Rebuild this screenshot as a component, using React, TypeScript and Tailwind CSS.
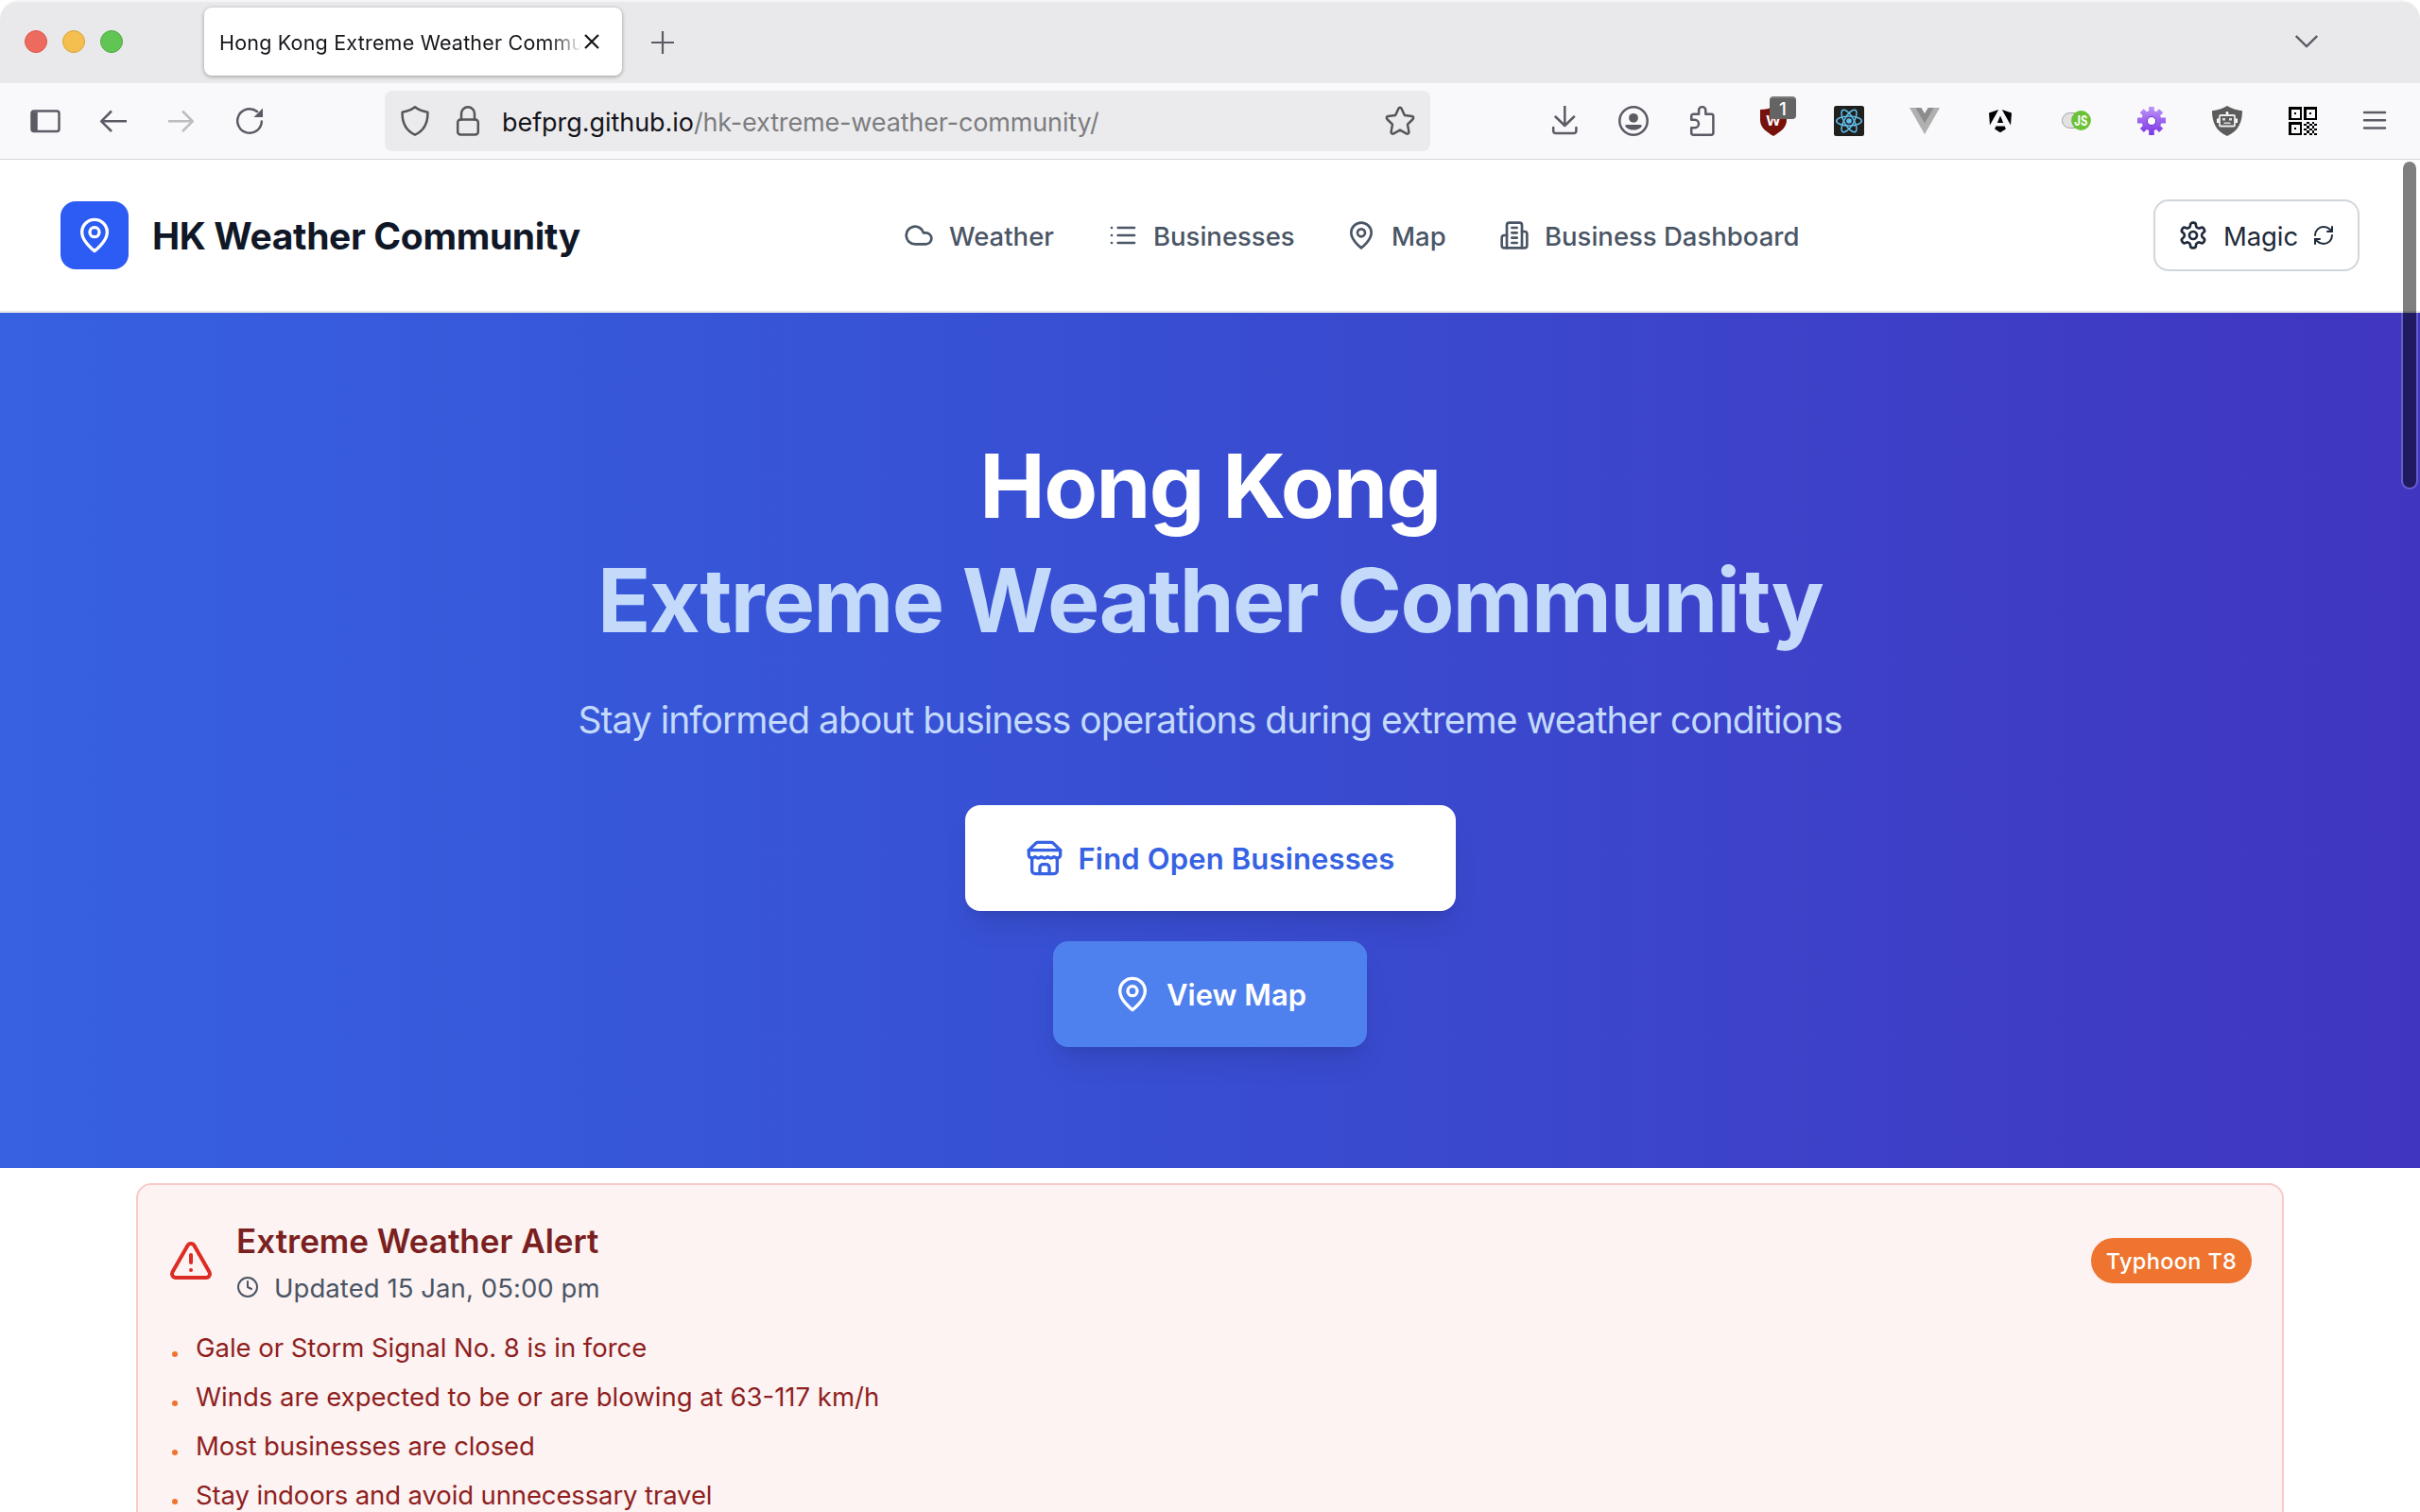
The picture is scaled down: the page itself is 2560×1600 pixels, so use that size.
import type { ReactNode } from 'react'

type IconProps = { className?: string; children?: ReactNode }

function Icon({ className, children }: IconProps) {
  return (
    <svg
      viewBox="0 0 24 24"
      fill="none"
      stroke="currentColor"
      strokeWidth="2"
      strokeLinecap="round"
      strokeLinejoin="round"
      className={`shrink-0 ${className}`}
    >
      {children}
    </svg>
  )
}

function MapPinIcon({ className }: IconProps) {
  return (
    <Icon className={className}>
      <path d="M20 10c0 6-8 12-8 12s-8-6-8-12a8 8 0 0 1 16 0Z" />
      <circle cx="12" cy="10" r="3" />
    </Icon>
  )
}

function CloudIcon({ className }: IconProps) {
  return (
    <Icon className={className}>
      <path d="M17.5 19H9a7 7 0 1 1 6.71-9h1.79a4.5 4.5 0 1 1 0 9Z" />
    </Icon>
  )
}

function ListIcon({ className }: IconProps) {
  return (
    <Icon className={className}>
      <path d="M8 6h13M8 12h13M8 18h13M3 6h.01M3 12h.01M3 18h.01" />
    </Icon>
  )
}

function BuildingIcon({ className }: IconProps) {
  return (
    <Icon className={className}>
      <path d="M6 22V4a2 2 0 0 1 2-2h8a2 2 0 0 1 2 2v18Z" />
      <path d="M6 12H4a2 2 0 0 0-2 2v6a2 2 0 0 0 2 2h2" />
      <path d="M18 9h2a2 2 0 0 1 2 2v9a2 2 0 0 1-2 2h-2" />
      <path d="M10 6h4M10 10h4M10 14h4M10 18h4" />
    </Icon>
  )
}

function SettingsIcon({ className }: IconProps) {
  return (
    <Icon className={className}>
      <path d="M12.22 2h-.44a2 2 0 0 0-2 2v.18a2 2 0 0 1-1 1.73l-.43.25a2 2 0 0 1-2 0l-.15-.08a2 2 0 0 0-2.73.73l-.22.38a2 2 0 0 0 .73 2.73l.15.1a2 2 0 0 1 1 1.72v.51a2 2 0 0 1-1 1.74l-.15.09a2 2 0 0 0-.73 2.73l.22.38a2 2 0 0 0 2.73.73l.15-.08a2 2 0 0 1 2 0l.43.25a2 2 0 0 1 1 1.73V20a2 2 0 0 0 2 2h.44a2 2 0 0 0 2-2v-.18a2 2 0 0 1 1-1.73l.43-.25a2 2 0 0 1 2 0l.15.08a2 2 0 0 0 2.73-.73l.22-.39a2 2 0 0 0-.73-2.73l-.15-.08a2 2 0 0 1-1-1.74v-.5a2 2 0 0 1 1-1.74l.15-.09a2 2 0 0 0 .73-2.73l-.22-.38a2 2 0 0 0-2.73-.73l-.15.08a2 2 0 0 1-2 0l-.43-.25a2 2 0 0 1-1-1.73V4a2 2 0 0 0-2-2z" />
      <circle cx="12" cy="12" r="3" />
    </Icon>
  )
}

function RefreshIcon({ className }: IconProps) {
  return (
    <Icon className={className}>
      <path d="M3 12a9 9 0 0 1 9-9 9.75 9.75 0 0 1 6.74 2.74L21 8" />
      <path d="M21 3v5h-5" />
      <path d="M21 12a9 9 0 0 1-9 9 9.75 9.75 0 0 1-6.74-2.74L3 16" />
      <path d="M8 16H3v5" />
    </Icon>
  )
}

function StoreIcon({ className }: IconProps) {
  return (
    <Icon className={className}>
      <path d="m2 7 4.41-4.41A2 2 0 0 1 7.83 2h8.34a2 2 0 0 1 1.42.59L22 7" />
      <path d="M4 12v8a2 2 0 0 0 2 2h12a2 2 0 0 0 2-2v-8" />
      <path d="M15 22v-4a2 2 0 0 0-2-2h-2a2 2 0 0 0-2 2v4" />
      <path d="M2 7h20" />
      <path d="M22 7v3a2 2 0 0 1-2 2a2.7 2.7 0 0 1-1.59-.63.7.7 0 0 0-.82 0A2.7 2.7 0 0 1 16 12a2.7 2.7 0 0 1-1.59-.63.7.7 0 0 0-.82 0A2.7 2.7 0 0 1 12 12a2.7 2.7 0 0 1-1.59-.63.7.7 0 0 0-.82 0A2.7 2.7 0 0 1 8 12a2.7 2.7 0 0 1-1.59-.63.7.7 0 0 0-.82 0A2.7 2.7 0 0 1 4 12a2 2 0 0 1-2-2V7" />
    </Icon>
  )
}

function AlertIcon({ className }: IconProps) {
  return (
    <Icon className={className}>
      <path d="m21.73 18-8-14a2 2 0 0 0-3.48 0l-8 14A2 2 0 0 0 4 21h16a2 2 0 0 0 1.73-3" />
      <path d="M12 9v4" />
      <path d="M12 17h.01" />
    </Icon>
  )
}

function ClockIcon({ className }: IconProps) {
  return (
    <Icon className={className}>
      <circle cx="12" cy="12" r="10" />
      <path d="M12 6v6l4 2" />
    </Icon>
  )
}

// 32x32 glyphs of the browser toolbar
function Glyph({ className = '', children }: IconProps) {
  return (
    <svg
      viewBox="0 0 32 32"
      fill="none"
      stroke="currentColor"
      strokeWidth="2.5"
      strokeLinecap="round"
      strokeLinejoin="round"
      className={`size-8 shrink-0 ${className}`}
    >
      {children}
    </svg>
  )
}

function UblockExtension() {
  return (
    <div className="relative size-8 shrink-0">
      <svg viewBox="0 0 32 32" className="size-8">
        <path d="M2 4c5 0 10-1 14-3 4 2 9 3 14 3v11c0 8-6 12-14 17C8 27 2 23 2 15Z" fill="#76110b" />
        <text x="16" y="20.5" fontSize="19" fontWeight="600" fill="#fff" textAnchor="middle">
          w
        </text>
      </svg>
      <span className="absolute -top-[10px] left-3 flex h-6 w-7 items-center justify-center rounded-[4px] border-t-2 border-[#7c7c7c] bg-[#646464] text-[19px] font-medium leading-none text-white">
        1
      </span>
    </div>
  )
}

function ReactExtension() {
  return (
    <svg viewBox="0 0 32 32" className="size-8 shrink-0">
      <rect width="32" height="32" rx="2.5" fill="#20201f" />
      <g fill="none" stroke="#61bfee" strokeWidth="1.5">
        <ellipse cx="16" cy="16" rx="13.3" ry="5" />
        <ellipse cx="16" cy="16" rx="13.3" ry="5" transform="rotate(60 16 16)" />
        <ellipse cx="16" cy="16" rx="13.3" ry="5" transform="rotate(120 16 16)" />
      </g>
      <circle cx="16" cy="16" r="2.8" fill="#61bfee" />
    </svg>
  )
}

function VueExtension() {
  return (
    <svg viewBox="0 0 32 32" className="size-8 shrink-0">
      <path d="M0 2h12.3L16 8.2 19.7 2H32L16 30Z" fill="#b0b0b0" />
      <path d="M6.3 2h6L16 8.2 19.7 2h6L16 18.6Z" fill="#8d8d8d" />
    </svg>
  )
}

function AngularExtension() {
  return (
    <svg viewBox="0 0 32 32" className="size-8 shrink-0" fill="#000">
      <path d="M14.2 4 5 20.5 4 7.4Z" />
      <path d="M17.8 4 27 20.5 28 7.4Z" />
      <path d="m16 10.5 3.2 7.5h-6.4Z" />
      <path d="M11.4 21.5h9.2l1.3 3.1L16 28.3l-5.9-3.7Z" />
    </svg>
  )
}

function JsToggleExtension() {
  return (
    <svg viewBox="0 0 32 32" className="size-8 shrink-0">
      <rect x="1.5" y="7.5" width="26" height="16" rx="8" fill="#e2e2e2" stroke="#a5a5a5" />
      <circle cx="21.5" cy="15.5" r="10.4" fill="#6cc236" />
      <text x="21.3" y="21" fontSize="15" fontWeight="700" fill="#fff" textAnchor="middle" textLength="14" lengthAdjust="spacingAndGlyphs">
        JS
      </text>
    </svg>
  )
}

function GearExtension() {
  return (
    <svg viewBox="0 0 32 32" className="size-8 shrink-0">
      <defs>
        <linearGradient id="gear" x1="0" y1="0" x2="0" y2="1">
          <stop offset="0" stopColor="#bd93f7" />
          <stop offset="1" stopColor="#7c35e4" />
        </linearGradient>
      </defs>
      <path
        fill="url(#gear)"
        d="M13.2 1h5.6v4.3l2.2.9 3-3 4.2 4-3.1 3.1.9 2.3H31v6h-4.8l-.9 2.3 2.9 3-4.1 4-3-2.9-2.3.9V31h-5.6v-5.1l-2.3-.9-3 2.9-4-4 2.9-3-.9-2.3H1v-6h4.8l.9-2.3-3-3.1 4-4 3.2 3 2.3-.9Z"
      />
      <circle cx="16" cy="16" r="4.6" fill="#fff" stroke="#6d28d9" />
    </svg>
  )
}

function RobotExtension() {
  return (
    <svg viewBox="0 0 32 32" className="size-8 shrink-0">
      <path d="M16 0c5 3 10 4.5 16 5.3C32 17 28 27 16 32 4 27 0 17 0 5.3 6 4.5 11 3 16 0Z" fill="#5c5c5c" />
      <path d="M16 10V6.5" stroke="#fff" strokeWidth="1.6" />
      <circle cx="16" cy="7.5" r="1.5" fill="#fff" />
      <rect x="8" y="10" width="16" height="11.5" rx="1" fill="#5c5c5c" stroke="#eee" strokeWidth="1.8" />
      <path d="M5 13.5h2.5V18H5zM24.5 13.5H27V18h-2.5z" fill="#fff" />
      <path d="M11 13h3v2.5h-3zM18 13h3v2.5h-3zM12.5 17.5h7V19h-7z" fill="#ddd" />
    </svg>
  )
}

function QrExtension() {
  return (
    <svg viewBox="0 0 32 32" className="size-8 shrink-0" shapeRendering="crispEdges">
      <g fill="none" stroke="#000" strokeWidth="2.5">
        <rect x="2.5" y="2.5" width="11.5" height="11.5" />
        <rect x="18.5" y="2.5" width="11.5" height="11.5" />
        <rect x="2.5" y="18.5" width="11.5" height="11.5" />
      </g>
      <path d="M7 7h2v2H7zM23 7h2v2h-2zM7 23h2v2H7z" fill="#000" />
      <path
        d="M20 17h3v2h-3zM26 17h2v2h-2zM17 19h3v2h-3zM23 19h3v2h-3zM28 19h3v2h-3zM20 21h3v3h-3zM26 21h2v3h-2zM17 24h3v2h-3zM23 24h3v2h-3zM28 24h3v2h-3zM20 26h3v3h-3zM26 26h2v3h-2zM17 29h3v2h-3zM23 29h3v2h-3zM28 29h3v2h-3z"
        fill="#000"
      />
    </svg>
  )
}

function TabStrip() {
  return (
    <div className="flex h-[88px] shrink-0 items-start rounded-t-[20px] border-t-2 border-[#f4f4f5] bg-[#e9e9eb] pl-[26px] pr-[108px] pt-[6px]">
      <div className="flex h-18 items-center gap-4">
        <span className="size-6 rounded-full border border-[#d8574b] bg-[#ec6a5e]" />
        <span className="size-6 rounded-full border border-[#d9a23b] bg-[#f4bf4f]" />
        <span className="size-6 rounded-full border border-[#50a83f] bg-[#61c554]" />
      </div>
      <div className="ml-[86px] flex h-18 w-[442px] items-center rounded-lg bg-white pl-4 shadow-[0_1px_4px_rgba(0,0,0,0.35)]">
        <div className="w-[382px] overflow-hidden whitespace-nowrap pt-[2px] text-[21.5px] leading-8 tracking-[0.2px] text-[#15141a] [mask-image:linear-gradient(to_right,black_350px,transparent_384px)]">
          Hong Kong Extreme Weather Community
        </div>
        <svg viewBox="0 0 16 16" className="ml-1 size-4" stroke="#15141a" strokeWidth="2.2">
          <path d="m1 1 14 14M15 1 1 15" />
        </svg>
      </div>
      <div className="ml-[31px] flex h-18 flex-1 items-center justify-between pt-[2px] text-[#5b5b66]">
        <svg viewBox="0 0 24 24" className="size-6" stroke="currentColor" strokeWidth="2.2">
          <path d="M12 0v24M0 12h24" />
        </svg>
        <svg viewBox="0 0 24 14" className="mb-[2px] h-[14px] w-6" fill="none" stroke="currentColor" strokeWidth="2.4">
          <path d="m.8 1 11.2 11L23.2 1" />
        </svg>
      </div>
    </div>
  )
}

function Toolbar() {
  return (
    <div className="flex h-[81px] shrink-0 items-center border-b border-[#d6d6da] bg-[#f9f9fb] pl-8 pr-8 text-[#5b5b66]">
      <Glyph>
        <rect x="1.5" y="5.5" width="29" height="21.5" rx="2.5" />
        <path d="M4.5 6.5v20" strokeWidth="6.5" strokeLinecap="butt" />
      </Glyph>
      <Glyph className="ml-10">
        <path d="M30 16.3H3.5M14 5.5 3.2 16.3 14 27" strokeLinecap="butt" />
      </Glyph>
      <Glyph className="ml-10 text-[#bcbcc1]">
        <path d="M2 16.3h25.5M17 5.5l10.8 10.8L17 27" strokeLinecap="butt" />
      </Glyph>
      <Glyph className="ml-10">
        <path d="M28.8 16.5A12.8 12.8 0 1 1 24 6" />
        <path d="M30 2.5V12H20.500Z" fill="currentColor" stroke="none" />
      </Glyph>

      <div className="ml-[127px] flex h-16 w-[1106px] items-center rounded-lg bg-[#ebebed] pl-4 pr-4 text-[#555558]">
        <Glyph>
          <path d="M16 1.3c4 3.2 8.5 4.6 13.4 5.4.4 12-4.6 20-13.4 24-8.800-4-13.800-12-13.400-24C7.500 5.900 12 4.500 16 1.300Z" />
        </Glyph>
        <Glyph className="ml-6">
          <rect x="5.2" y="14.5" width="21.6" height="16" rx="3" />
          <path d="M9 14.5V8.3a7 7 0 0 1 14 0v6.2" />
        </Glyph>
        <div className="ml-5 flex-1 whitespace-nowrap pt-1 text-[27px] leading-9 tracking-[-0.15px] text-[#7d7d80]">
          <span className="tracking-[-0.05px] text-[#15141a]">befprg.github.io</span>/hk-extreme-weather-community/
        </div>
        <Glyph>
          <path d="M16 1.8c.8 0 1.3.5 1.6 1.1l3.3 7.2 7.8 1c1.5.2 2 1.8 1 2.9l-5.7 5.600 1.400 8c.2 1.500-1.300 2.500-2.600 1.800L16 25.600l-6.800 3.800c-1.300.7-2.800-.3-2.600-1.800l1.400-8L2.300 14c-1-1.100-.5-2.700 1-2.900l7.800-1 3.300-7.200c.3-.6.8-1.100 1.600-1.100Z" />
        </Glyph>
      </div>

      <Glyph className="ml-[127px]">
        <path d="M15.3.5v19.8M5.5 11.5l9.800 9.500 9.800-9.500M3.200 23v3.500a2.600 2.600 0 0 0 2.600 2.500h19a2.600 2.600 0 0 0 2.600-2.500V23" />
      </Glyph>
      <Glyph className="ml-10">
        <circle cx="16" cy="16" r="14.7" />
        <circle cx="16" cy="12.8" r="4.9" fill="currentColor" stroke="none" />
        <path d="M8.8 20h14.4c1.500 0 2.100 1 1.200 2.200-4.200 4.500-12.600 4.500-16.800 0-.9-1.200-.3-2.200 1.200-2.200Z" fill="currentColor" stroke="none" />
      </Glyph>
      <Glyph className="ml-10">
        <path d="M5.2 14.8V11A2.2 2.2 0 0 1 7.4 8.8h5.700V4.700a3.600 3.600 0 0 1 7.200 0v4.100h5.900a2.200 2.200 0 0 1 2.200 2.200v17.500a2.200 2.200 0 0 1-2.200 2.200H7.400a2.200 2.200 0 0 1-2.200-2.200v-5.300h3.600a4.200 4.200 0 0 0 0-8.400Z" />
      </Glyph>
      <div className="ml-11 flex gap-12">
        <UblockExtension />
        <ReactExtension />
        <VueExtension />
        <AngularExtension />
        <JsToggleExtension />
        <GearExtension />
        <RobotExtension />
        <QrExtension />
      </div>
      <Glyph className="ml-11">
        <path d="M5 7h22M5 15.2h22M5 23.4h22" />
      </Glyph>
    </div>
  )
}

const navItems = [
  { label: 'Weather', icon: CloudIcon, width: 'w-[112px]' },
  { label: 'Businesses', icon: ListIcon, width: 'w-[148px]' },
  { label: 'Map', icon: MapPinIcon, width: 'w-[58px]' },
  { label: 'Business Dashboard', icon: BuildingIcon, width: 'w-[270px]' },
]

function Header() {
  return (
    <header className="flex h-[162px] shrink-0 items-center border-b-2 border-gray-200 bg-white pl-16 pr-16">
      <div className="flex w-[892px] items-center gap-[25px]">
        <div className="flex size-18 items-center justify-center rounded-2xl bg-[#2c5cf3] text-white">
          <MapPinIcon className="size-10" />
        </div>
        <span className="whitespace-nowrap text-[39px] font-bold leading-none tracking-[-0.35px] text-[#101828]">HK Weather Community</span>
      </div>
      <nav className="flex flex-1 gap-[56px] text-[27.5px] font-[450] leading-10 text-[#4a5565]">
        {navItems.map((item) => (
          <a key={item.label} className="flex items-center gap-4 whitespace-nowrap">
            <item.icon className="size-8" />
            <span className={`pt-[2px] ${item.width}`}>{item.label}</span>
          </a>
        ))}
      </nav>
      <button className="flex h-19 w-[218px] items-center gap-4 rounded-2xl border-2 border-[#d1d5dc] pl-6 text-[27.5px] leading-10 text-[#1e2939]">
        <SettingsIcon className="size-8" />
        <span className="w-[78px] pt-[2px] text-left tracking-[-0.1px]">Magic</span>
        <RefreshIcon className="size-6" />
      </button>
    </header>
  )
}

function Hero() {
  return (
    <section className="flex h-[905px] shrink-0 flex-col items-center bg-linear-to-r from-[#3661e1] via-[#384dd1] to-[#4035c0] pt-[123px]">
      <h1 className="whitespace-nowrap text-center text-[93px] font-bold leading-[121px] tracking-[-1.65px] text-white">
        Hong Kong
        <span className="block text-[#c3dafb]">Extreme Weather Community</span>
      </h1>
      <p className="mt-[38px] whitespace-nowrap text-[39px] leading-14 tracking-[-0.98px] text-[#c3dafb]">
        Stay informed about business operations during extreme weather conditions
      </p>
      <div className="mt-[62px] flex flex-col items-center gap-8 text-[31px] font-semibold leading-12">
        <button className="flex h-28 w-[519px] items-center gap-4 whitespace-nowrap rounded-2xl bg-white pl-16 text-[#3662e3] shadow-[0_20px_30px_-6px_rgba(0,0,0,0.1),0_8px_12px_-8px_rgba(0,0,0,0.1)]">
          <StoreIcon className="size-10" />
          <span className="pt-[2px] tracking-[0.15px]">Find Open Businesses</span>
        </button>
        <button className="flex h-28 w-[332px] items-center gap-4 whitespace-nowrap rounded-2xl bg-[#4f81ee] pl-16 text-white shadow-[0_20px_30px_-6px_rgba(0,0,0,0.1),0_8px_12px_-8px_rgba(0,0,0,0.1)]">
          <MapPinIcon className="size-10" />
          <span className="pt-[2px]">View Map</span>
        </button>
      </div>
    </section>
  )
}

const advisories = [
  { text: 'Gale or Storm Signal No. 8 is in force', tracking: 'tracking-[-0.03px]' },
  { text: 'Winds are expected to be or are blowing at 63-117 km/h', tracking: 'tracking-normal' },
  { text: 'Most businesses are closed', tracking: 'tracking-[-0.12px]' },
  { text: 'Stay indoors and avoid unnecessary travel', tracking: 'tracking-[-0.12px]' },
]

function WeatherAlert() {
  return (
    <section className="mx-36 mt-4 h-[400px] shrink-0 rounded-2xl border-2 border-[#f8c9c9] bg-[#fcf3f2] px-8 pt-[31px]">
      <div className="flex items-center">
        <AlertIcon className="size-12 text-[#dc2c24]" />
        <div className="ml-6 flex-1">
          <h2 className="whitespace-nowrap pt-[1px] text-[35px] font-semibold leading-[55px] text-[#7b2020]">Extreme Weather Alert</h2>
          <div className="flex items-center gap-4 whitespace-nowrap text-[27.5px] leading-10 text-[#4a5565]">
            <ClockIcon className="size-6" />
            <span className="pt-[2px] tracking-[0.07px]">Updated 15 Jan, 05:00 pm</span>
          </div>
        </div>
        <span className="flex h-12 w-[170px] items-center justify-center whitespace-nowrap rounded-full bg-[#ee742f] pt-[2px] text-[23.5px] font-[450] tracking-[0.35px] text-white">
          Typhoon T8
        </span>
      </div>
      <ul className="mt-[18px] text-[27.5px] text-[#8f1f1f]">
        {advisories.map((item) => (
          <li key={item.text} className="flex h-13 items-center whitespace-nowrap">
            <span className="ml-[4px] mr-[19px] mt-[11px] size-[6px] rounded-full bg-[#ee742f]" />
            <span className={item.tracking}>{item.text}</span>
          </li>
        ))}
      </ul>
    </section>
  )
}

export default function App() {
  return (
    <div className="relative flex h-[1600px] w-[2560px] flex-col overflow-hidden bg-white font-['Inter','Liberation_Sans',sans-serif]">
      <TabStrip />
      <Toolbar />
      <Header />
      <Hero />
      <WeatherAlert />
      {/* Overlay scrollbar */}
      <div className="absolute right-[2px] top-[169px] h-[349px] w-[18px] rounded-full border-2 border-white/20 bg-black/50 bg-clip-padding" />
    </div>
  )
}
